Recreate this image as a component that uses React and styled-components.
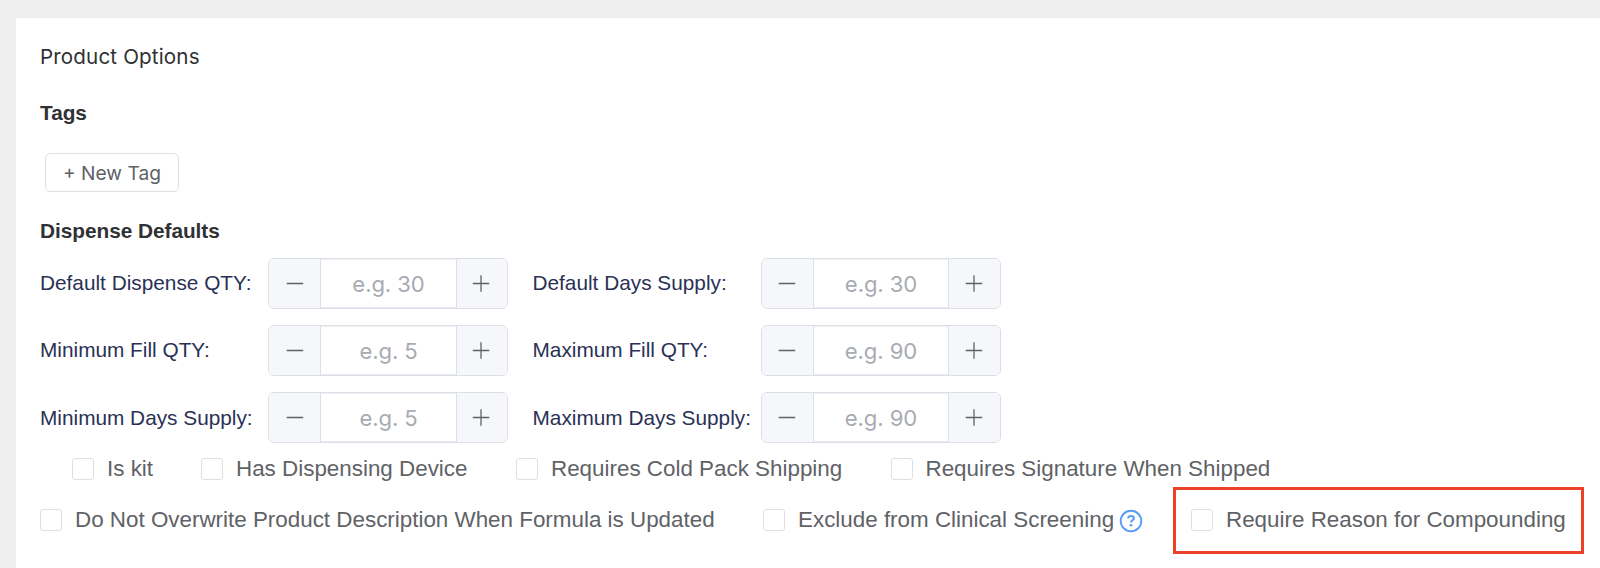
import React from "react";
import styled, { createGlobalStyle } from "styled-components";

const GlobalStyle = createGlobalStyle`
  *, *::before, *::after { box-sizing: border-box; }
  body {
    margin: 0;
    background: #efefef;
    font-family: "Liberation Sans", Arial, sans-serif;
    -webkit-font-smoothing: antialiased;
  }
`;

const Page = styled.div`
  height: 568px;
  padding: 18px 0 0 16px;
  overflow: hidden;
  background: #efefef;
`;

const Card = styled.main`
  height: 550px;
  padding: 25px 16px 0 24px;
  background: #fff;
  display: flex;
  flex-direction: column;
  align-items: flex-start;
`;

const Title = styled.h2`
  margin: 0 0 28px;
  font: 430 20.6px/28px Inter, sans-serif;
  letter-spacing: 0.15px;
  color: #303133;
`;

const SectionTitle = styled.h3`
  margin: 0;
  font-size: 20.8px;
  line-height: 28px;
  font-weight: 700;
  letter-spacing: -0.03px;
  color: #303133;
`;

const NewTagButton = styled.button`
  margin: 26px 0 25px 5px;
  width: 134px;
  height: 39px;
  padding: 1px 0 0;
  border: 1px solid #dcdfe6;
  border-radius: 5px;
  background: #fff;
  color: #606266;
  font: 420 19.2px/36px Inter, sans-serif;
  letter-spacing: 0;
`;

const Fields = styled.div`
  display: grid;
  grid-template-columns: 228px 240px 253px 240px;
  grid-auto-rows: 51px;
  row-gap: 16px;
  margin-top: 13px;
`;

const FieldLabel = styled.label`
  display: flex;
  align-items: center;
  padding-left: ${(p) => (p.$second ? 24.5 : 0)}px;
  padding-bottom: ${(p) => (p.$low ? 0 : 2)}px;
  font-size: 20.8px;
  white-space: nowrap;
  color: #2a3155;
`;

const Stepper = styled.div`
  display: flex;
  border: 1px solid #dcdfe6;
  border-radius: 6px;
  overflow: hidden;
  background: #fff;
`;

const StepButton = styled.button`
  width: ${(p) => (p.$narrow ? 51 : 52)}px;
  padding: 0 ${(p) => (p.$narrow ? 2 : p.$second || p.$right ? 1 : 0)}px 0 0;
  display: flex;
  align-items: center;
  justify-content: center;
  border: 0 solid #dcdfe6;
  border-left-width: ${(p) => (p.$right ? 1 : 0)}px;
  border-right-width: ${(p) => (p.$right ? 0 : 1)}px;
  background: #f5f7fa;
  color: #606266;
`;

const StepInput = styled.input`
  flex: 1;
  min-width: 0;
  padding: 0;
  border: 0;
  outline: 0;
  background: transparent;
  box-shadow: inset 0 1px #eff0f4, inset 0 -1px #e9ebf0;
  text-align: center;
  font: 400 22.1px Inter, sans-serif;
  letter-spacing: -0.1px;
  &::placeholder { color: #a8abb2; opacity: 1; }
`;

const CheckRow = styled.div`
  display: flex;
  align-items: center;
  height: 22px;
  margin-top: ${(p) => p.$top}px;
  padding-left: ${(p) => p.$indent || 0}px;
`;

const CheckLabel = styled.label`
  display: flex;
  align-items: center;
  gap: 13px;
  flex: none;
  width: ${(p) => (p.$width ? p.$width + "px" : "auto")};
  font-size: 22.4px;
  line-height: 22px;
  white-space: nowrap;
  color: #606266;
`;

const Box = styled.input`
  appearance: none;
  flex: none;
  width: 22px;
  height: 22px;
  margin: 0;
  border: 1px solid #dcdfe6;
  border-radius: 3px;
  background: #fff;
`;

const HelpIcon = styled.svg`
  display: block;
  flex: none;
  margin: 2px 0 0 -8px;
`;

const Highlight = styled.div`
  flex: none;
  display: flex;
  align-items: center;
  width: 411px;
  height: 67px;
  padding: 0 0 1px 15px;
  margin-top: 1px;
  border: 3px solid #ea4228;
`;

const Sign = ({ plus }) => (
  <svg width="18" height="18" viewBox="0 0 18 18" fill="none" stroke="currentColor" strokeWidth="1.3">
    <path d="M0.8 8.5H17.2" />
    {plus && <path d="M9 0.3V16.7" />}
  </svg>
);

const NumberField = ({ label, hint, second, low }) => (
  <>
    <FieldLabel $second={second} $low={low}>{label}</FieldLabel>
    <Stepper>
      <StepButton $second={second} aria-label="Decrease"><Sign /></StepButton>
      <StepInput placeholder={hint} />
      <StepButton $right $narrow={!second} aria-label="Increase"><Sign plus /></StepButton>
    </Stepper>
  </>
);

const Check = ({ label, width, children }) => (
  <CheckLabel $width={width}>
    <Box type="checkbox" />
    <span>{label}</span>
    {children}
  </CheckLabel>
);

const FIELDS = [
  ["Default Dispense QTY:", "e.g. 30", "Default Days Supply:", "e.g. 30"],
  ["Minimum Fill QTY:", "e.g. 5", "Maximum Fill QTY:", "e.g. 90"],
  ["Minimum Days Supply:", "e.g. 5", "Maximum Days Supply:", "e.g. 90"],
];

export default function App() {
  return (
    <Page>
      <GlobalStyle />
      <Card>
        <Title>Product Options</Title>
        <SectionTitle>Tags</SectionTitle>
        <NewTagButton>+ New Tag</NewTagButton>
        <SectionTitle>Dispense Defaults</SectionTitle>
        <Fields>
          {FIELDS.map(([a, ah, b, bh], i) => (
            <React.Fragment key={a}>
              <NumberField label={a} hint={ah} low={i === 2} />
              <NumberField label={b} hint={bh} low={i === 2} second />
            </React.Fragment>
          ))}
        </Fields>
        <CheckRow $top={15} $indent={32}>
          <Check label="Is kit" width={129} />
          <Check label="Has Dispensing Device" width={315} />
          <Check label="Requires Cold Pack Shipping" width={374.5} />
          <Check label="Requires Signature When Shipped" />
        </CheckRow>
        <CheckRow $top={29}>
          <Check label="Do Not Overwrite Product Description When Formula is Updated" width={723} />
          <Check label="Exclude from Clinical Screening" width={410}>
            <HelpIcon width="24" height="24" viewBox="0 0 24 24" fill="none" stroke="#5a9cf8" strokeWidth="1.9">
              <circle cx="12" cy="12" r="10.3" />
              <path d="M9.1 9.4C9.3 7.9 10.4 7.1 12 7.1c1.7 0 2.9.9 2.9 2.3 0 1.6-2.9 1.9-2.9 4" strokeWidth="2" />
              <circle cx="12" cy="16.2" r="1.3" fill="#5a9cf8" stroke="none" />
            </HelpIcon>
          </Check>
          <Highlight>
            <Check label="Require Reason for Compounding" />
          </Highlight>
        </CheckRow>
      </Card>
    </Page>
  );
}
